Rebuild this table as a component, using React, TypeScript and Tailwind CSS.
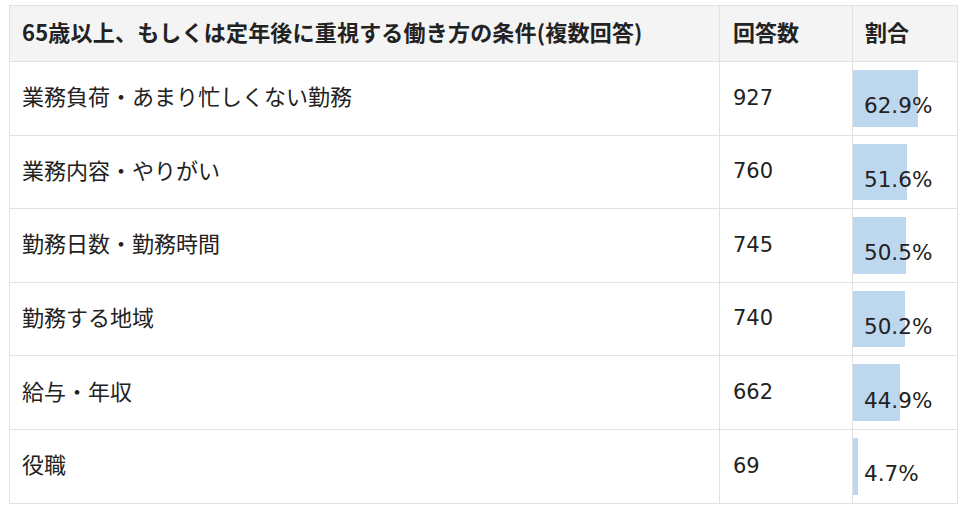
import React from 'react';

interface Row {
  label: string;
  count: number;
  pct: number;
}

const rows: Row[] = [
  { label: '業務負荷・あまり忙しくない勤務', count: 927, pct: 62.9 },
  { label: '業務内容・やりがい', count: 760, pct: 51.6 },
  { label: '勤務日数・勤務時間', count: 745, pct: 50.5 },
  { label: '勤務する地域', count: 740, pct: 50.2 },
  { label: '給与・年収', count: 662, pct: 44.9 },
  { label: '役職', count: 69, pct: 4.7 },
];

const App: React.FC = () => {
  return (
    <div className="w-[968px] h-[512px] bg-white pt-[5px] pl-[9px] text-[#222] font-['Noto_Sans_CJK_JP','Noto_Sans',sans-serif]">
      <table className="w-[948px] border-collapse table-fixed text-[22px]">
        <colgroup>
          <col className="w-[710px]" />
          <col className="w-[133px]" />
          <col className="w-[105px]" />
        </colgroup>
        <thead>
          <tr className="bg-[#f4f4f4] h-[56px]">
            <th className="border border-[#e2e2e2] px-[12px] pb-[4px] text-left font-bold tracking-[0.2px]">65歳以上、もしくは定年後に重視する働き方の条件(複数回答)</th>
            <th className="border border-[#e2e2e2] px-[13px] pb-[4px] text-left font-bold">回答数</th>
            <th className="border border-[#e2e2e2] px-[12px] pb-[4px] text-left font-bold">割合</th>
          </tr>
        </thead>
        <tbody>
          {rows.map((r) => (
            <tr key={r.label} className="h-[73.6px]">
              <td className="border border-[#e2e2e2] px-[12px] pb-[5px]">{r.label}</td>
              <td className="border border-[#e2e2e2] px-[13px] font-['DejaVu_Sans',sans-serif] text-[21px]">{r.count}</td>
              <td className="border border-[#e2e2e2] p-0 relative font-['DejaVu_Sans',sans-serif] text-[21.5px]">
                {/* bar sits behind the percentage text */}
                <div className="absolute left-0 top-[8px] bottom-[8px] bg-[#bdd7ee]" style={{ width: `${r.pct}%` }} />
                <span className="relative block pl-[11px] pt-[16px]">{r.pct}%</span>
              </td>
            </tr>
          ))}
        </tbody>
      </table>
    </div>
  );
};

export default App;
